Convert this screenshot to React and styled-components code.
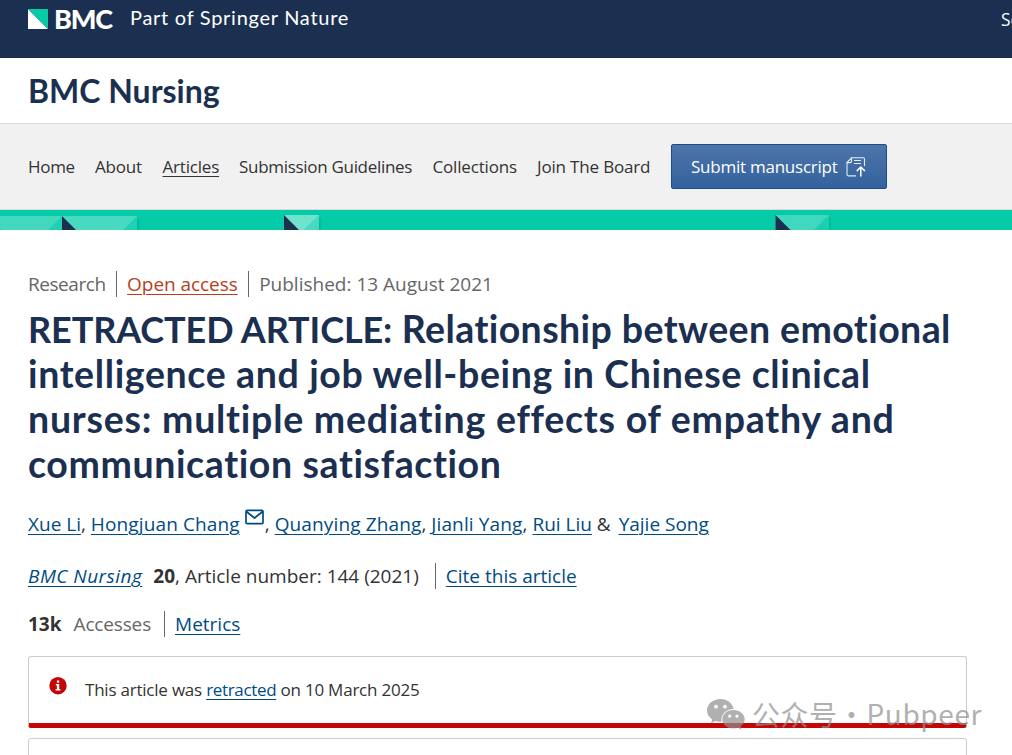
import React from 'react';
import styled, { createGlobalStyle } from 'styled-components';

export default function App() {
  return (
    <>
      <GlobalStyle />
      <Page>
        <TopBar>
          <Brand>
            <BmcMark />
            <BrandName>BMC</BrandName>
            <BrandTagline>Part of Springer Nature</BrandTagline>
          </Brand>
          <SearchLink>Search</SearchLink>
        </TopBar>

        <JournalBar>
          <JournalTitle>BMC Nursing</JournalTitle>
        </JournalBar>

        <Nav>
          <NavLink $w={47} $ls={-0.3}>Home</NavLink>
          <NavLink $w={47.5}>About</NavLink>
          <NavLink $w={56.5} $active $ls={-0.2}>Articles</NavLink>
          <NavLink $w={173.5} $ls={-0.3}>Submission Guidelines</NavLink>
          <NavLink $w={84.5}>Collections</NavLink>
          <NavLink $w={114}>Join The Board</NavLink>
          <SubmitButton>
            <span>Submit manuscript</span>
            <SubmitIcon />
          </SubmitButton>
        </Nav>
        <Pattern />

        <Article>
          <MetaList>
            <MetaItem $muted $ls={-0.45}>Research</MetaItem>
            <MetaItem $divided><OpenAccess $ls={-0.06}>Open access</OpenAccess></MetaItem>
            <MetaItem $muted $divided>Published: 13 August 2021</MetaItem>
          </MetaList>

          <Title>
            <TitleLine $ls={0.4}><Caps>RETRACTED ARTICLE:</Caps> Relationship between emotional</TitleLine>
            <TitleLine $ls={0.63}>intelligence and job well-being in Chinese clinical</TitleLine>
            <TitleLine $ls={0.75}>nurses: multiple mediating effects of empathy and</TitleLine>
            <TitleLine $ls={0.6}>communication satisfaction</TitleLine>
          </Title>

          <Authors>
            <Link>Xue Li</Link>, <Link $ls={0.13}>Hongjuan Chang</Link><MailIcon />, <Link $ls={0.13}>Quanying Zhang</Link>, <Link $ls={0.14}>Jianli Yang</Link>, <Link>Rui Liu</Link> <Ampersand>&amp;</Ampersand> <Link>Yajie Song</Link>
          </Authors>

          <Citation>
            <MetaItem>
              <Link as="em" $ls={0.48}>BMC Nursing</Link>
              <Volume>20</Volume>, Article number: 144 (2021)
            </MetaItem>
            <MetaItem $divided $gap={16}><Link>Cite this article</Link></MetaItem>
          </Citation>

          <Metrics>
            <MetaItem><b>13k</b> <Muted>Accesses</Muted></MetaItem>
            <MetaItem $divided $gap={13}><Link>Metrics</Link></MetaItem>
          </Metrics>

          <Notice $alert>
            <InfoIcon />
            <NoticeText>This article was <Link $ls={-0.33}>retracted</Link> on 10 March 2025</NoticeText>
          </Notice>
          <Notice />
        </Article>

        <Watermark>
          <WeChatIcon />
          <WatermarkLabel>公众号</WatermarkLabel>
          <WatermarkDot>·</WatermarkDot>
          <WatermarkName>Pubpeer</WatermarkName>
        </Watermark>
      </Page>
    </>
  );
}

function BmcMark() {
  return (
    <svg width="20" height="20" viewBox="0 0 20 20">
      <path d="M0 0V20H20Z" fill="#fff" />
      <path d="M0 0H20V20Z" fill="#05cba8" />
    </svg>
  );
}

function SubmitIcon() {
  return (
    <svg width="20" height="20" viewBox="0 0 20 20" fill="none" stroke="#e4ecf5" strokeWidth="1.1" strokeLinecap="round" strokeLinejoin="round">
      <path d="M9.500 18.900H2.500A1.500 1.500 0 0 1 1 17.400V5.500L5.500 .8H17.200A1.300 1.300 0 0 1 18.500 2.100V8.500" />
      <path d="M1 5.600H4.200A1.300 1.300 0 0 0 5.500 4.300V.8" />
      <path d="M8.500 3.500H14.500M8.500 6.500H14.500" />
      <path d="M14.800 18.900V10.600M11.200 13.600L14.800 10L18.500 13.600" stroke="#fff" strokeWidth="1.500" />
    </svg>
  );
}

function Pattern() {
  return (
    <PatternStrip width="1012" height="20" viewBox="0 0 1012 20">
      <defs>
        <linearGradient id="shade">
          <stop offset="0" stopColor="#04a98f" stopOpacity=".7" />
          <stop offset="1" stopColor="#05cba8" stopOpacity="0" />
        </linearGradient>
      </defs>
      <path d="M137 9h6v11h-6z" fill="url(#shade)" />
      <path d="M319 8h5v12h-5z" fill="url(#shade)" />
      <path d="M829 8h5v12h-5z" fill="url(#shade)" />
      <path d="M0 6H62V20H0Z" fill="#42d8be" />
      <path d="M62 6V20H48Z M0 18.500L2 20H0Z" fill="#1fd0b2" />
      <path d="M62 6H137V20H62Z" fill="#47dac1" />
      <path d="M137 6V20H123Z" fill="#20d1b3" />
      <path d="M284 5H319V20H284Z" fill="#70e3cf" />
      <path d="M319 5V20H303.500Z" fill="#47dac1" />
      <path d="M775.500 5H829V20H775.500Z" fill="#40d8be" />
      <path d="M829 5V20H814Z" fill="#1acfb0" />
      <path d="M62 6L76 20H62Z M284 5L299 20H284Z M775.500 5L790.500 20H775.500Z" fill="#1b3051" />
    </PatternStrip>
  );
}

function MailIcon() {
  return (
    <MailSvg width="20" height="16" viewBox="0 0 20 16" fill="none" stroke="#004b83" strokeWidth="1.7" strokeLinejoin="round">
      <rect x="1" y="1.300" width="17" height="13.400" rx="1.200" />
      <path d="M1.300 2.500L9.500 9L17.700 2.500" />
    </MailSvg>
  );
}

function InfoIcon() {
  return (
    <InfoSvg width="18" height="18" viewBox="0 0 18 18">
      <circle cx="9" cy="8.700" r="8.700" fill="#c40606" />
      <path d="M7.900 3.500H10.200V5.700H7.900Z M6.800 7H10.200V12H11.400V13.400H6.600V12H7.900V8.400H6.800Z" fill="#fff" />
    </InfoSvg>
  );
}

function WeChatIcon() {
  return (
    <svg width="38" height="31" viewBox="0 0 38 31" fill="#8f8f8f">
      <path fillRule="evenodd" d="M13.500 0C6 0 0 5 0 11.500C0 15 2 18.300 5.200 20.400L4 24.300L8.600 22C10.500 22.700 12.500 23 14.600 22.800C13.200 16 19 10 26.700 10C25.600 4.200 20 0 13.500 0Z M9 5.800A1.900 1.900 0 1 1 9 9.600A1.900 1.900 0 0 1 9 5.800Z M18 5.800A1.900 1.900 0 1 1 18 9.600A1.900 1.900 0 0 1 18 5.800Z" />
      <path fillRule="evenodd" d="M26.300 11C20.200 11 15.300 15.200 15.300 20.300C15.300 25.500 20.200 29.500 26.300 29.500C27.900 29.500 29.500 29.200 30.900 28.700L34.600 30.700L33.700 27.300C36.200 25.600 37.700 23.100 37.700 20.300C37.700 15.200 32.500 11 26.300 11Z M22.700 15.600A1.600 1.600 0 1 1 22.700 18.800A1.600 1.600 0 0 1 22.700 15.600Z M30 15.600A1.600 1.600 0 1 1 30 18.800A1.600 1.600 0 0 1 30 15.600Z" />
    </svg>
  );
}

const GlobalStyle = createGlobalStyle`
  body {
    margin: 0;
    background: #fff;
    color: #333;
    font-family: "Open Sans", "Noto Sans", sans-serif;
    overflow: hidden;
  }
`
const Page = styled.div`
  position: relative;
  width: 1012px;
  height: 755px;
  overflow: hidden;
`
const TopBar = styled.header`
  display: flex;
  justify-content: space-between;
  box-sizing: border-box;
  height: 58px;
  padding: 0 0 0 28px;
  background: #1b3051;
  color: #fff;
  overflow: hidden;
`
const Brand = styled.div`
  display: flex;
  align-items: center;
  height: 38px;
  font-family: Lato, sans-serif;
`
const BrandName = styled.span`
  margin-left: 6px;
  padding-bottom: 1px;
  width: 58px;
  font-size: 27px;
  font-weight: 900;
  letter-spacing: -1.2px;
`
const BrandTagline = styled.span`
  margin-left: 18px;
  padding-bottom: 4px;
  font-size: 20px;
  letter-spacing: 0.72px;
  white-space: nowrap;
`
const SearchLink = styled.span`
  width: 11px;
  line-height: 40px;
  font-size: 17.3px;
  white-space: nowrap;
`
const JournalBar = styled.div`
  display: flex;
  align-items: center;
  height: 65px;
  padding: 0 28px;
  border-bottom: 1px solid #dadada;
`
const JournalTitle = styled.div`
  font-family: Lato, sans-serif;
  font-size: 32px;
  font-weight: 700;
  color: #1b3051;
`
const Nav = styled.nav`
  display: flex;
  align-items: center;
  gap: 20px;
  height: 85px;
  padding-left: 28px;
  background: #f1f1f1;
  border-bottom: 1px solid #dadada;
`
const NavLink = styled.a`
  width: ${p => p.$w}px;
  font-size: 17px;
  letter-spacing: ${p => p.$ls || -0.17}px;
  white-space: nowrap;
  text-decoration: ${p => (p.$active ? 'underline' : 'none')};
  text-decoration-thickness: 1px;
  text-underline-offset: 3px;
`
const SubmitButton = styled.button`
  display: flex;
  align-items: center;
  gap: 8px;
  box-sizing: border-box;
  width: 216px;
  height: 45px;
  padding: 0 19px;
  border: 1px solid #1a4c8f;
  border-radius: 2px;
  background: linear-gradient(#4d76a9, #33629e);
  color: #fff;
  font-family: inherit;
  font-size: 17px;
  letter-spacing: -0.24px;
  white-space: nowrap;

  span {
    width: 147px;
    text-align: left;
  }
`
const PatternStrip = styled.svg`
  display: block;
  background: #05cba8;
`
const Article = styled.main`
  padding: 39px 45px 0 28px;
  font-size: 19px;
`
const MetaList = styled.div`
  display: flex;
  align-items: center;
  height: 29px;
`
const MetaItem = styled.span`
  display: flex;
  align-items: center;
  height: 26px;
  white-space: pre;
  letter-spacing: ${p => p.$ls || 0}px;
  color: ${p => (p.$muted ? '#666' : '#333')};
  ${p => p.$divided && `
    margin-left: ${p.$gap || 10.500}px;
    padding-left: 10px;
    border-left: 1px solid #666;
  `}
`
const Link = styled.a`
  color: #004b83;
  letter-spacing: ${p => p.$ls || 0}px;
  text-decoration: underline;
  text-decoration-thickness: 1px;
  text-underline-offset: 3px;
`
const OpenAccess = styled(Link)`
  color: #b73e1b;
`
const Title = styled.h1`
  margin: 8px 0 0;
  font-family: Lato, sans-serif;
  font-size: 37.5px;
  font-weight: 700;
  line-height: 45px;
  color: #1b3051;
`
const TitleLine = styled.span`
  display: block;
  height: 45px;
  white-space: nowrap;
  letter-spacing: ${p => p.$ls}px;
`
const Caps = styled.span`
  font-size: 36px;
  letter-spacing: -0.1px;
`
const Authors = styled.div`
  height: 30px;
  margin-top: 23px;
  line-height: 30px;
  white-space: nowrap;
`
const Ampersand = styled.span`
  margin: 0 3px 0 0;
`
const MailSvg = styled.svg`
  margin: 0 0 0 5px;
  vertical-align: 6px;
`
const Citation = styled.div`
  display: flex;
  align-items: center;
  height: 30px;
  margin-top: 22px;
`
const Volume = styled.b`
  margin-left: 11px;
`
const Metrics = styled.div`
  display: flex;
  align-items: center;
  height: 30px;
  margin-top: 18px;
`
const Muted = styled.span`
  margin-left: 12px;
  letter-spacing: -0.15px;
  color: #666;
`
const Notice = styled.div`
  display: flex;
  box-sizing: border-box;
  height: 72px;
  margin-top: ${p => (p.$alert ? 17 : 10)}px;
  padding: 20px;
  border: 1px solid #ccc;
  border-radius: 3px;
  border-bottom: ${p => (p.$alert ? '5px solid #c40606' : '1px solid #ccc')};
`
const InfoSvg = styled.svg`
  flex: none;
`
const NoticeText = styled.p`
  margin: 0 0 0 18px;
  font-size: 17px;
  letter-spacing: -0.22px;
  line-height: 26px;
`
const Watermark = styled.div`
  position: absolute;
  left: 707px;
  top: 694px;
  display: flex;
  align-items: center;
  height: 40px;
  font-family: "Noto Sans CJK SC", sans-serif;
  font-size: 28px;
  line-height: 38px;
  color: #8f8f8f;
  opacity: 0.7;
`
const WatermarkLabel = styled.span`
  margin-left: 7px;
  padding-bottom: 1px;
  letter-spacing: 0.5px;
  white-space: nowrap;
`
const WatermarkDot = styled.span`
  display: flex;
  justify-content: center;
  width: 28px;
`
const WatermarkName = styled.span`
  margin-left: 1px;
  padding-bottom: 2px;
  letter-spacing: 0.6px;
`
